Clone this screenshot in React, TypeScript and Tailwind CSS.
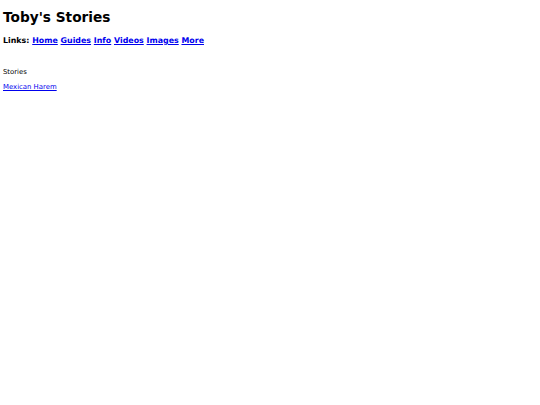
export default function App() {
  const links = ["Home", "Guides", "Info", "Videos", "Images", "More"];
  return (
    <div className="min-h-[405px] bg-white px-[3px] pt-[9px] text-black" style={{ fontFamily: '"DejaVu Sans", sans-serif' }}>
      <h1 className="text-[13.7px] font-bold leading-[17px]">Toby's Stories</h1>
      <p className="mt-[10px] text-[7.9px] font-bold leading-[10px]">
        Links:{" "}
        {links.map((l) => (
          <span key={l}>
            <a href="#" className="text-[#0000ee] underline">{l}</a>{" "}
          </span>
        ))}
      </p>
      <p className="mt-[22px] text-[6.9px] leading-[9px]">Stories</p>
      <p className="mt-[6px] text-[6.9px] leading-[9px]">
        <a href="#" className="text-[#0000ee] underline">Mexican Harem</a>
      </p>
    </div>
  );
}
